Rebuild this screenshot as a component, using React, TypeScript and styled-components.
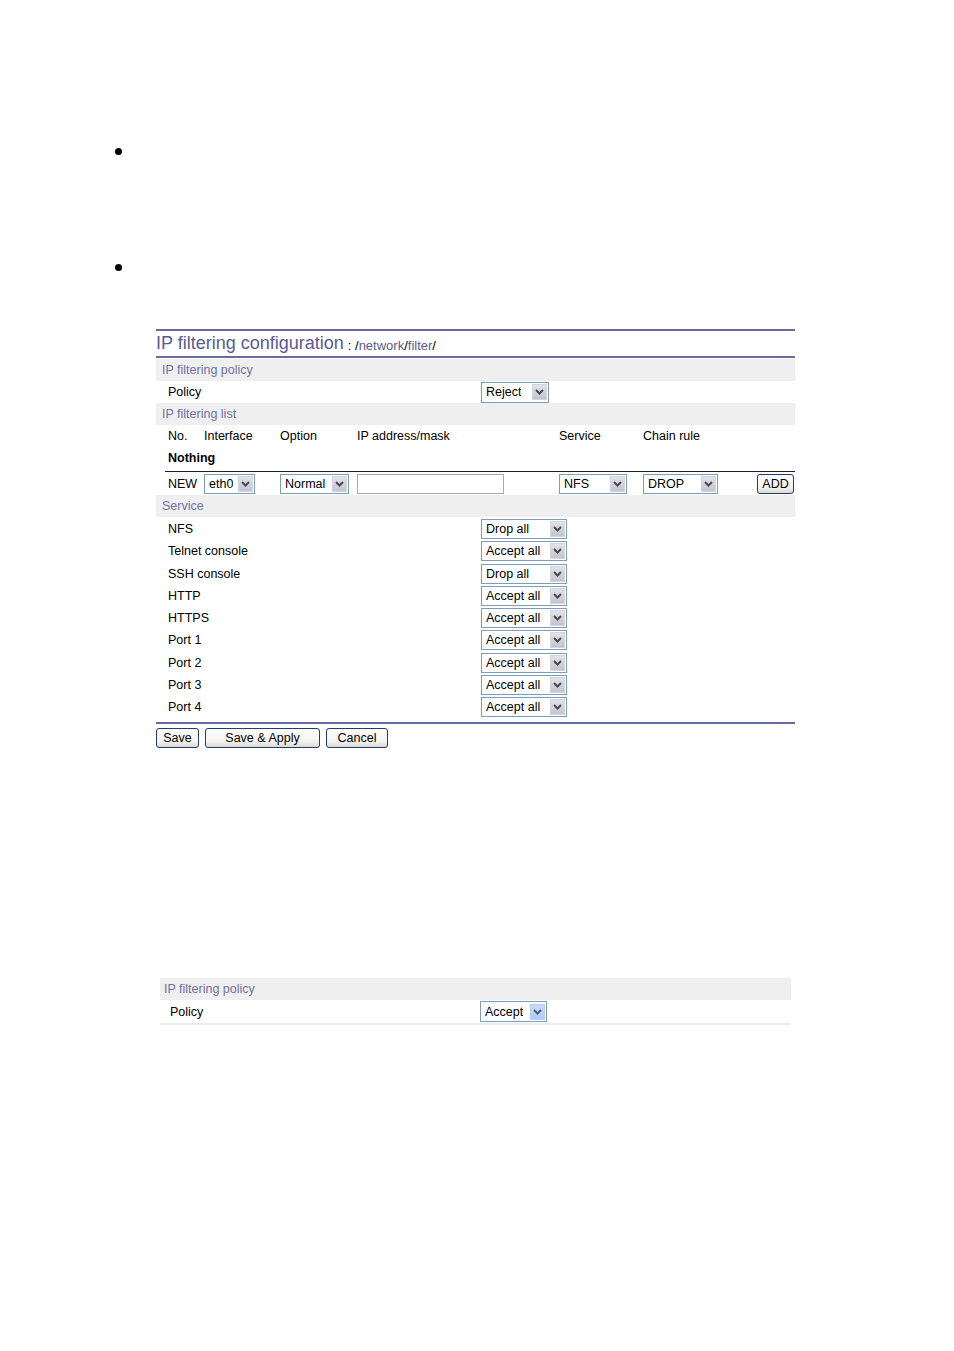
import React from "react";
import styled, { createGlobalStyle } from "styled-components";

const GlobalStyle = createGlobalStyle`
  html, body {
    margin: 0;
    padding: 0;
    background: #ffffff;
  }
  body {
    font-family: "Liberation Sans", Arial, sans-serif;
    font-size: 12.5px;
    color: #000;
  }
`;

const Page = styled.div`
  width: 954px;
  height: 1351px;
  overflow: hidden;
  padding-top: 148px;
  box-sizing: border-box;
`;

const Bullet = styled.div<{ $top?: number }>`
  width: 7px;
  height: 7px;
  border-radius: 50%;
  background: #000;
  margin-left: 115px;
  margin-top: ${(p) => p.$top ?? 0}px;
`;

const Panel = styled.div`
  margin: 58px 0 0 156px;
  width: 639px;
  border-top: 2px solid #6b6b9b;
`;

const TitleBar = styled.div`
  height: 25px;
  display: flex;
  align-items: center;
  border-bottom: 2px solid #6b6b9b;
  margin-bottom: 1px;
`;

const Title = styled.span`
  font-size: 18px;
  color: #5b5b8f;
  margin-right: 4px;
`;

const Path = styled.span`
  font-size: 13px;
  color: #000;
  padding-top: 3px;
`;

const PathPart = styled.span`
  color: #5b5b8f;
`;

const SectionHeader = styled.div<{ $indent?: number }>`
  height: 22px;
  display: flex;
  align-items: center;
  background: #efefef;
  color: #7272a2;
  padding-left: ${(p) => p.$indent ?? 6}px;
`;

const LabelRow = styled.div<{ $h?: number; $pad?: number; $label?: number }>`
  height: ${(p) => p.$h ?? 22}px;
  display: grid;
  grid-template-columns: ${(p) => p.$label ?? 313}px 1fr;
  align-items: center;
  padding-left: ${(p) => p.$pad ?? 12}px;
`;

const ServiceList = styled.div`
  padding-top: 1px;
`;

const ListGrid = styled.div`
  display: grid;
  grid-template-columns: 36px 76px 77px 202px 84px 114px 1fr;
  align-items: center;
  padding-left: 12px;
  height: 22px;
`;

const NothingRow = styled.div`
  height: 22px;
  display: flex;
  align-items: center;
  padding-left: 12px;
  font-weight: bold;
`;

const NewRow = styled(ListGrid)`
  margin-top: 2px;
  margin-left: 9px;
  padding-left: 3px;
  border-top: 1px solid #222;
  height: 23px;
`;

const SelectBox = styled.div<{ $w: number; $h?: number }>`
  width: ${(p) => p.$w}px;
  height: ${(p) => p.$h ?? 20}px;
  box-sizing: border-box;
  border: 1px solid #7f9db9;
  background: #fff;
  display: flex;
  align-items: center;
  justify-content: space-between;
  padding-left: 4px;
  padding-right: 1px;
`;

const SelectText = styled.span`
  white-space: nowrap;
  overflow: hidden;
`;

const ArrowBox = styled.div<{ $blue?: boolean }>`
  width: 15px;
  height: 16px;
  flex: none;
  box-sizing: border-box;
  display: flex;
  align-items: center;
  justify-content: center;
  border: 1px solid ${(p) => (p.$blue ? "#b9cdf5" : "#d4d4de")};
  background: ${(p) =>
    p.$blue
      ? "linear-gradient(#c9daf8, #b3c9f3)"
      : "linear-gradient(#e2e2ea, #c4c4d2)"};
`;

const TextInput = styled.div`
  width: 147px;
  height: 20px;
  box-sizing: border-box;
  border: 1px solid #a5acb2;
  background: #fff;
`;

const Button = styled.button<{ $w: number }>`
  width: ${(p) => p.$w}px;
  height: 20px;
  padding: 0;
  font-family: "Liberation Sans", Arial, sans-serif;
  font-size: 12.5px;
  color: #000;
  border: 1px solid #1f3d70;
  border-radius: 3px;
  background: linear-gradient(#ffffff, #f3f2ee 70%, #dcd8cf);
  cursor: pointer;
`;

const AddCell = styled.div`
  display: flex;
  justify-content: flex-end;
  padding-right: 2px;
`;

const BottomRule = styled.div`
  margin-top: 4px;
  border-top: 2px solid #6b6b9b;
`;

const ButtonBar = styled.div`
  display: flex;
  gap: 6px;
  margin-top: 4px;
`;

const SecondPanel = styled.div`
  margin: 230px 0 0 160px;
  width: 631px;
  border-bottom: 2px solid #ebebeb;
`;

const Chevron = ({ blue }: { blue?: boolean }) => (
  <svg width="9" height="6" viewBox="0 0 9 6">
    <polyline
      points="1,1 4.5,4.5 8,1"
      fill="none"
      stroke={blue ? "#4a5f8c" : "#4a4a4a"}
      strokeWidth="2"
    />
  </svg>
);

const Select = ({
  value,
  width,
  height,
  blue,
}: {
  value: string;
  width: number;
  height?: number;
  blue?: boolean;
}) => (
  <SelectBox $w={width} $h={height}>
    <SelectText>{value}</SelectText>
    <ArrowBox $blue={blue}>
      <Chevron blue={blue} />
    </ArrowBox>
  </SelectBox>
);

const services: [string, string][] = [
  ["NFS", "Drop all"],
  ["Telnet console", "Accept all"],
  ["SSH console", "Drop all"],
  ["HTTP", "Accept all"],
  ["HTTPS", "Accept all"],
  ["Port 1", "Accept all"],
  ["Port 2", "Accept all"],
  ["Port 3", "Accept all"],
  ["Port 4", "Accept all"],
];

export default function App() {
  return (
    <Page>
      <GlobalStyle />
      <Bullet />
      <Bullet $top={109} />

      <Panel>
        <TitleBar>
          <Title>IP filtering configuration</Title>
          <Path>
            : /<PathPart>network</PathPart>/<PathPart>filter</PathPart>/
          </Path>
        </TitleBar>

        <SectionHeader>IP filtering policy</SectionHeader>
        <LabelRow>
          <span>Policy</span>
          <Select value="Reject" width={68} height={21} />
        </LabelRow>

        <SectionHeader>IP filtering list</SectionHeader>
        <ListGrid>
          <span>No.</span>
          <span>Interface</span>
          <span>Option</span>
          <span>IP address/mask</span>
          <span>Service</span>
          <span>Chain rule</span>
          <span />
        </ListGrid>
        <NothingRow>Nothing</NothingRow>
        <NewRow>
          <span>NEW</span>
          <Select value="eth0" width={51} />
          <Select value="Normal" width={69} />
          <TextInput />
          <Select value="NFS" width={68} />
          <Select value="DROP" width={75} />
          <AddCell>
            <Button $w={37}>ADD</Button>
          </AddCell>
        </NewRow>

        <SectionHeader>Service</SectionHeader>
        <ServiceList>
          {services.map(([name, value]) => (
            <LabelRow key={name} $h={22.25}>
              <span>{name}</span>
              <Select value={value} width={86} />
            </LabelRow>
          ))}
        </ServiceList>

        <BottomRule />
        <ButtonBar>
          <Button $w={43}>Save</Button>
          <Button $w={115}>Save &amp; Apply</Button>
          <Button $w={62}>Cancel</Button>
        </ButtonBar>
      </Panel>

      <SecondPanel>
        <SectionHeader $indent={4}>IP filtering policy</SectionHeader>
        <LabelRow $h={23} $pad={10} $label={310}>
          <span>Policy</span>
          <Select value="Accept" width={67} height={21} blue />
        </LabelRow>
      </SecondPanel>
    </Page>
  );
}
